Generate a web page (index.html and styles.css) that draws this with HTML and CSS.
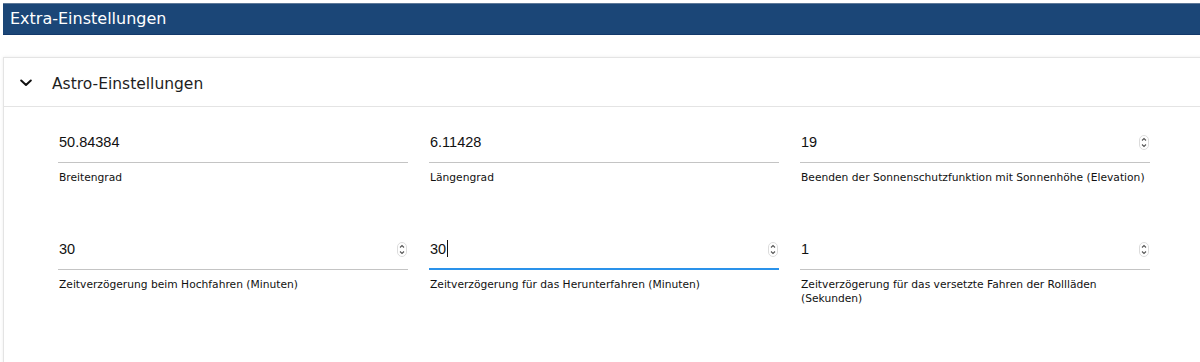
FILE: index.html
```html
<!DOCTYPE html>
<html lang="de">

<head>
  <meta charset="UTF-8" />
  <meta name="viewport" content="width=device-width, initial-scale=1.0" />
  <title>Extra-Einstellungen</title>
  <link rel="stylesheet" href="styles.css">
</head>

<body>
  <div class="page">
    <h1 class="page-title">Extra-Einstellungen</h1>

    <div class="panel">
      <div class="panel-head">
        <svg class="chevron" width="12" height="8" viewBox="0 0 12 8">
          <path d="M1.2 1.5 L6 6 L10.8 1.5" fill="none" stroke="#111" stroke-width="2" stroke-linecap="round" stroke-linejoin="round" />
        </svg>
        <span class="panel-title">Astro-Einstellungen</span>
      </div>

      <div class="panel-body">
        <div class="field">
          <div class="control"><span class="value">50.84384</span></div>
          <label>Breitengrad</label>
        </div>
        <div class="field">
          <div class="control"><span class="value">6.11428</span></div>
          <label>Längengrad</label>
        </div>
        <div class="field">
          <div class="control">
            <span class="value">19</span>
            <svg class="spin" width="10" height="15" viewBox="0 0 10 15">
              <rect x="0.5" y="0.5" width="9" height="14" rx="4.5" fill="#fff" stroke="#dcdcdc" />
              <path d="M3 5.5 L5 3.5 L7 5.5 M3 9.5 L5 11.5 L7 9.5" fill="none" stroke="#555" stroke-width="1.1" />
            </svg>
          </div>
          <label>Beenden der Sonnenschutzfunktion mit Sonnenhöhe (Elevation)</label>
        </div>

        <div class="field">
          <div class="control">
            <span class="value">30</span>
            <svg class="spin" width="10" height="15" viewBox="0 0 10 15">
              <rect x="0.5" y="0.5" width="9" height="14" rx="4.5" fill="#fff" stroke="#dcdcdc" />
              <path d="M3 5.5 L5 3.5 L7 5.5 M3 9.5 L5 11.5 L7 9.5" fill="none" stroke="#555" stroke-width="1.1" />
            </svg>
          </div>
          <label>Zeitverzögerung beim Hochfahren (Minuten)</label>
        </div>
        <div class="field">
          <div class="control focused">
            <span class="value">30<span class="caret"></span></span>
            <svg class="spin" width="10" height="15" viewBox="0 0 10 15">
              <rect x="0.5" y="0.5" width="9" height="14" rx="4.5" fill="#fff" stroke="#dcdcdc" />
              <path d="M3 5.5 L5 3.5 L7 5.5 M3 9.5 L5 11.5 L7 9.5" fill="none" stroke="#555" stroke-width="1.1" />
            </svg>
          </div>
          <label>Zeitverzögerung für das Herunterfahren (Minuten)</label>
        </div>
        <div class="field">
          <div class="control">
            <span class="value">1</span>
            <svg class="spin" width="10" height="15" viewBox="0 0 10 15">
              <rect x="0.5" y="0.5" width="9" height="14" rx="4.5" fill="#fff" stroke="#dcdcdc" />
              <path d="M3 5.5 L5 3.5 L7 5.5 M3 9.5 L5 11.5 L7 9.5" fill="none" stroke="#555" stroke-width="1.1" />
            </svg>
          </div>
          <label>Zeitverzögerung für das versetzte Fahren der Rollläden (Sekunden)</label>
        </div>
      </div>
    </div>
  </div>
</body>

</html>
```

FILE: styles.css
```css
body {
  margin: 0;
  padding: 3px 0 0 3px;
  background: #fff;
  overflow: hidden;
  font-family: "DejaVu Sans", sans-serif;
  color: #222;
}

.page {
  width: 1230px;
}

.page-title {
  margin: 0;
  height: 30px;
  line-height: 30px;
  padding-left: 7px;
  font-size: 16px;
  font-weight: normal;
  color: #fff;
  background-color: #1b4677;
  border-top: 1px solid #5d7898;
  border-bottom: 1px solid #12386a;
}

.panel {
  margin-top: 22px;
  border: 1px solid #e4e4e4;
  box-shadow: 0 0 3px rgba(0, 0, 0, 0.08);
  height: 320px;
}

.panel-head {
  display: flex;
  align-items: center;
  height: 46px;
  padding-top: 2px;
  border-bottom: 1px solid #e4e4e4;
}

.chevron {
  margin-left: 16px;
  margin-right: 20px;
}

.panel-title {
  font-size: 15.5px;
  color: #1e1e1e;
  padding-top: 2px;
}

.panel-body {
  display: grid;
  grid-template-columns: repeat(3, 350px);
  column-gap: 21px;
  row-gap: 54px;
  padding: 25px 0 0 54px;
  align-items: start;
}

.control {
  display: flex;
  align-items: center;
  justify-content: space-between;
  height: 20px;
  padding: 0 1px 10px 1px;
  border-bottom: 1px solid #c4c4c4;
}

.control.focused {
  border-bottom: 2px solid #2a92ea;
  padding-bottom: 9px;
}

.value {
  font-family: "Liberation Sans", Arial, sans-serif;
  font-size: 14.5px;
  color: #111;
  line-height: 20px;
}

.caret {
  display: inline-block;
  width: 1px;
  height: 17px;
  background: #111;
  vertical-align: -3px;
  margin-left: 1px;
}

.spin {
  display: block;
}

.field label {
  display: block;
  margin-top: 8px;
  padding-left: 1px;
  font-size: 10.7px;
  line-height: 14px;
  color: #111;
}
```
